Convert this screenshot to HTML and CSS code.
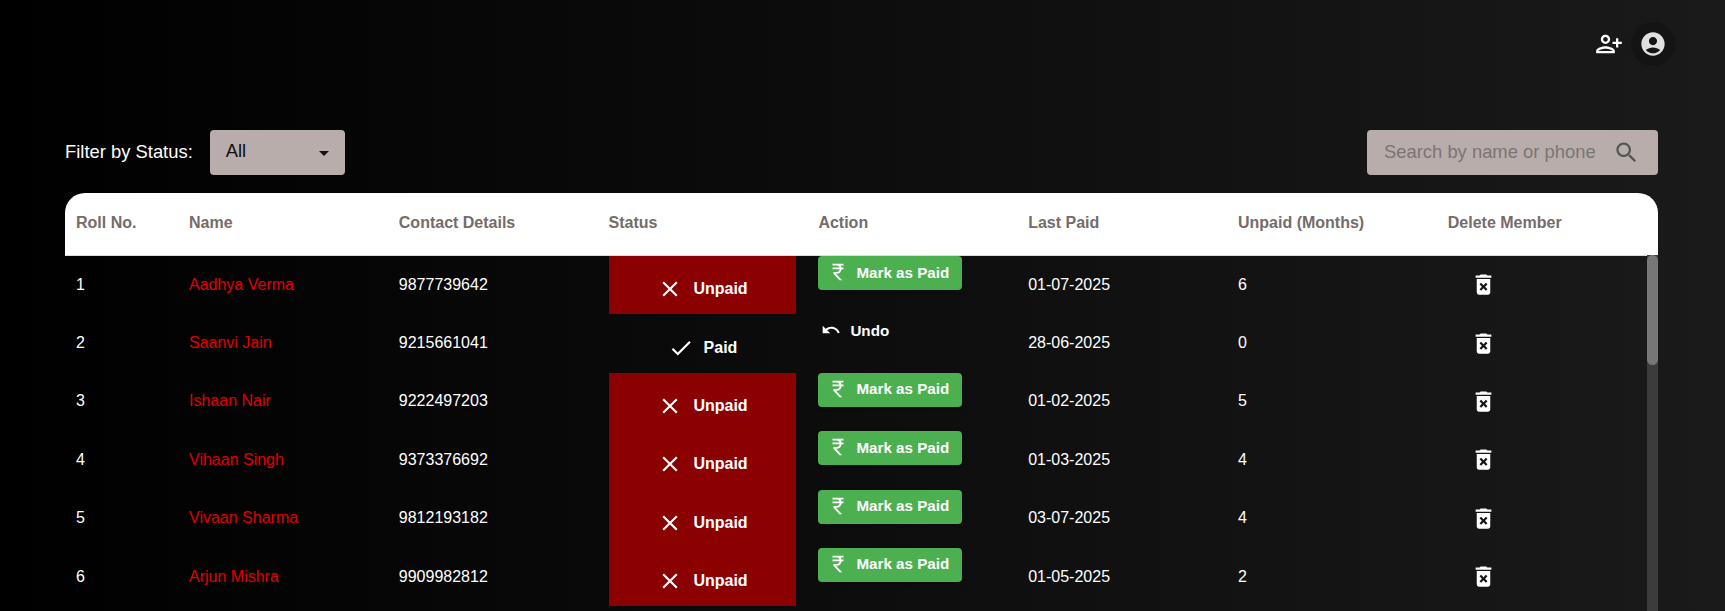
FILE: index.html
```html
<!DOCTYPE html>
<html lang="en">
<head>
    <meta charset="UTF-8">
    <meta name="viewport" content="width=device-width, initial-scale=1.0">
    <title>Members</title>
    <link rel="stylesheet" href="styles.css">
</head>
<body>
    <svg class="sprite" aria-hidden="true">
        <symbol id="i-add" viewBox="0 0 24 24"><path d="M13 8c0-2.21-1.79-4-4-4S5 5.79 5 8s1.79 4 4 4 4-1.79 4-4zm-2 0c0 1.1-.9 2-2 2s-2-.9-2-2 .9-2 2-2 2 .9 2 2zM1 18v2h16v-2c0-2.66-5.33-4-8-4s-8 1.34-8 4zm2 0c.2-.71 3.3-2 6-2 2.69 0 5.78 1.28 6 2H3zm17-3v-3h3v-2h-3V7h-2v3h-3v2h3v3h2z"/></symbol>
        <symbol id="i-account" viewBox="0 0 24 24"><path d="M12 2C6.48 2 2 6.48 2 12s4.48 10 10 10 10-4.48 10-10S17.52 2 12 2zm0 4c1.93 0 3.5 1.57 3.5 3.5S13.93 13 12 13s-3.5-1.57-3.5-3.5S10.07 6 12 6zm0 14c-2.03 0-4.43-.82-6.14-2.88C7.55 15.8 9.68 15 12 15s4.45.8 6.14 2.12C16.43 19.18 14.03 20 12 20z"/></symbol>
        <symbol id="i-search" viewBox="0 0 24 24"><path d="M15.5 14h-.79l-.28-.27C15.41 12.59 16 11.11 16 9.5 16 5.91 13.09 3 9.5 3S3 5.91 3 9.5 5.91 16 9.5 16c1.61 0 3.09-.59 4.23-1.57l.27.28v.79l5 4.99L20.49 19l-4.99-5zm-6 0C7.01 14 5 11.99 5 9.5S7.01 5 9.5 5 14 7.01 14 9.5 11.99 14 9.5 14z"/></symbol>
        <symbol id="i-close" viewBox="0 0 24 24"><path d="M19 6.41 17.59 5 12 10.59 6.41 5 5 6.41 10.59 12 5 17.59 6.41 19 12 13.41 17.59 19 19 17.59 13.41 12z"/></symbol>
        <symbol id="i-check" viewBox="0 0 24 24"><path d="M9 16.17 4.83 12l-1.41 1.41L9 19 21 7l-1.41-1.41z"/></symbol>
        <symbol id="i-rupee" viewBox="0 0 24 24"><path d="M13.66 7C13.1 5.82 11.9 5 10.5 5H6V3h12v2h-3.26c.48.58.84 1.26 1.05 2H18v2h-2.02c-.25 2.8-2.61 5-5.48 5h-.73l6.73 7h-2.77L7 14v-2h3.5c1.76 0 3.22-1.3 3.46-3H6V7h7.66z"/></symbol>
        <symbol id="i-undo" viewBox="0 0 24 24"><path d="M12.5 8c-2.65 0-5.05.99-6.9 2.6L2 7v9h9l-3.62-3.62c1.39-1.16 3.16-1.88 5.12-1.88 3.54 0 6.55 2.31 7.6 5.5l2.37-.78C21.08 11.03 17.15 8 12.5 8z"/></symbol>
        <symbol id="i-delete" viewBox="0 0 24 24"><path d="M6 19c0 1.1.9 2 2 2h8c1.1 0 2-.9 2-2V7H6v12zm2.46-7.12 1.41-1.41L12 12.59l2.12-2.12 1.41 1.41L13.41 14l2.12 2.12-1.41 1.41L12 15.41l-2.12 2.12-1.41-1.41L10.59 14l-2.13-2.12zM15.5 4l-1-1h-5l-1 1H5v2h14V4z"/></symbol>
    </svg>

    <header class="topbar">
        <button class="icon-btn add-btn" type="button"><svg class="icon"><use href="#i-add"/></svg></button>
        <button class="icon-btn account-btn" type="button"><svg class="icon"><use href="#i-account"/></svg></button>
    </header>

    <div class="toolbar">
        <div class="filter">
            <label class="filter-label">Filter by Status:</label>
            <div class="select"><span>All</span><span class="caret"></span></div>
        </div>
        <div class="search">
            <span class="placeholder">Search by name or phone</span>
            <svg class="icon"><use href="#i-search"/></svg>
        </div>
    </div>

    <div class="table-wrap">
        <table class="members">
            <colgroup>
                <col class="col-roll"><col class="col"><col class="col"><col class="col"><col class="col"><col class="col"><col class="col"><col>
            </colgroup>
            <thead>
                <tr>
                    <th>Roll No.</th><th>Name</th><th>Contact Details</th><th>Status</th><th>Action</th><th>Last Paid</th><th>Unpaid (Months)</th><th>Delete Member</th>
                </tr>
            </thead>
            <tbody>
                <tr>
                    <td>1</td><td class="name">Aadhya Verma</td><td>9877739642</td>
                    <td class="status-cell"><div class="status unpaid"><svg class="icon"><use href="#i-close"/></svg>Unpaid</div></td>
                    <td class="action-cell"><button class="pay-btn" type="button"><svg class="icon"><use href="#i-rupee"/></svg>Mark as Paid</button></td>
                    <td>01-07-2025</td><td>6</td>
                    <td class="delete-cell"><svg class="icon"><use href="#i-delete"/></svg></td>
                </tr>
                <tr>
                    <td>2</td><td class="name">Saanvi Jain</td><td>9215661041</td>
                    <td class="status-cell"><div class="status paid"><svg class="icon"><use href="#i-check"/></svg>Paid</div></td>
                    <td class="action-cell"><button class="undo-btn" type="button"><svg class="icon"><use href="#i-undo"/></svg>Undo</button></td>
                    <td>28-06-2025</td><td>0</td>
                    <td class="delete-cell"><svg class="icon"><use href="#i-delete"/></svg></td>
                </tr>
                <tr>
                    <td>3</td><td class="name">Ishaan Nair</td><td>9222497203</td>
                    <td class="status-cell"><div class="status unpaid"><svg class="icon"><use href="#i-close"/></svg>Unpaid</div></td>
                    <td class="action-cell"><button class="pay-btn" type="button"><svg class="icon"><use href="#i-rupee"/></svg>Mark as Paid</button></td>
                    <td>01-02-2025</td><td>5</td>
                    <td class="delete-cell"><svg class="icon"><use href="#i-delete"/></svg></td>
                </tr>
                <tr>
                    <td>4</td><td class="name">Vihaan Singh</td><td>9373376692</td>
                    <td class="status-cell"><div class="status unpaid"><svg class="icon"><use href="#i-close"/></svg>Unpaid</div></td>
                    <td class="action-cell"><button class="pay-btn" type="button"><svg class="icon"><use href="#i-rupee"/></svg>Mark as Paid</button></td>
                    <td>01-03-2025</td><td>4</td>
                    <td class="delete-cell"><svg class="icon"><use href="#i-delete"/></svg></td>
                </tr>
                <tr>
                    <td>5</td><td class="name">Vivaan Sharma</td><td>9812193182</td>
                    <td class="status-cell"><div class="status unpaid"><svg class="icon"><use href="#i-close"/></svg>Unpaid</div></td>
                    <td class="action-cell"><button class="pay-btn" type="button"><svg class="icon"><use href="#i-rupee"/></svg>Mark as Paid</button></td>
                    <td>03-07-2025</td><td>4</td>
                    <td class="delete-cell"><svg class="icon"><use href="#i-delete"/></svg></td>
                </tr>
                <tr>
                    <td>6</td><td class="name">Arjun Mishra</td><td>9909982812</td>
                    <td class="status-cell"><div class="status unpaid"><svg class="icon"><use href="#i-close"/></svg>Unpaid</div></td>
                    <td class="action-cell"><button class="pay-btn" type="button"><svg class="icon"><use href="#i-rupee"/></svg>Mark as Paid</button></td>
                    <td>01-05-2025</td><td>2</td>
                    <td class="delete-cell"><svg class="icon"><use href="#i-delete"/></svg></td>
                </tr>
            </tbody>
        </table>
        <div class="scrollbar"><div class="scroll-thumb"></div></div>
    </div>
</body>
</html>
```

FILE: styles.css
```css
html, body {
    height: 100%;
}
body {
    font-family: "Liberation Sans", Arial, sans-serif;
    background: linear-gradient(to right, #000, #1a1a1a);
    color: #fff;
    margin: 0;
    overflow: hidden;
}
.sprite {
    display: none;
}
.icon {
    display: block;
    fill: currentColor;
    flex: none;
}
button {
    font-family: inherit;
    border: none;
    cursor: pointer;
}
.topbar {
    display: flex;
    justify-content: flex-end;
    align-items: center;
    height: 44px;
    padding: 22px 50px 0 0;
}
.icon-btn {
    display: flex;
    align-items: center;
    justify-content: center;
    padding: 0;
    background: none;
}
.add-btn {
    color: #fff;
    width: 28px;
    height: 28px;
    margin-right: 8px;
}
.add-btn .icon {
    width: 28px;
    height: 28px;
}
.account-btn {
    color: #e0e0e0;
    width: 44px;
    height: 44px;
    border-radius: 50%;
    background: #141414;
}
.account-btn .icon {
    width: 28px;
    height: 28px;
}
.toolbar {
    display: flex;
    justify-content: space-between;
    align-items: center;
    margin: 64px 67px 0 65px;
}
.filter {
    display: flex;
    align-items: center;
    gap: 17px;
}
.filter-label {
    font-size: 18.4px;
    padding-bottom: 2px;
}
.select {
    display: flex;
    align-items: center;
    justify-content: space-between;
    box-sizing: border-box;
    width: 135px;
    height: 45px;
    padding: 0 16px 3px;
    background: #b8adab;
    border-radius: 4px;
    color: #111;
    font-size: 18.4px;
}
.caret {
    width: 0;
    height: 0;
    margin-top: 4px;
    border-left: 5px solid transparent;
    border-right: 5px solid transparent;
    border-top: 5px solid #111;
}
.search {
    display: flex;
    align-items: center;
    justify-content: space-between;
    box-sizing: border-box;
    width: 291px;
    height: 45px;
    padding: 0 18px 0 17px;
    background: #b8adab;
    border-radius: 4px;
    color: #555;
}
.search .icon {
    width: 27px;
    height: 27px;
}
.placeholder {
    font-size: 18.4px;
    color: #7b7573;
    padding-bottom: 2px;
}
.table-wrap {
    position: relative;
    margin: 18px 67px 0 65px;
}
.members {
    width: 100%;
    table-layout: fixed;
    border-collapse: collapse;
    font-size: 16px;
}
.col-roll {
    width: 113px;
}
.col {
    width: 209.8px;
}
.members th {
    height: 60px;
    padding: 0 0 2px 11px;
    background: #fff;
    border-bottom: 1px solid #ddd;
    color: #756c69;
    font-size: 16px;
    font-weight: bold;
    text-align: left;
}
.members th:first-child {
    border-top-left-radius: 20px;
}
.members th:last-child {
    border-top-right-radius: 20px;
}
.members td {
    height: 58.4px;
    padding: 0 0 1px 11px;
    box-sizing: border-box;
    color: #fff;
}
.members td.name {
    color: #e00000;
}
.members td.status-cell {
    padding-bottom: 0;
    vertical-align: top;
}
.status {
    display: flex;
    align-items: center;
    justify-content: center;
    gap: 10px;
    box-sizing: border-box;
    width: 187px;
    height: 58.4px;
    margin-left: 0.4px;
    padding-top: 8px;
    font-size: 16px;
    font-weight: bold;
}
.status .icon {
    width: 26px;
    height: 26px;
}
.unpaid {
    background: #8b0000;
}
.members td.action-cell {
    padding-bottom: 0;
    vertical-align: top;
}
.pay-btn, .undo-btn {
    display: flex;
    align-items: center;
    height: 34px;
    color: #fff;
    font-size: 15.2px;
    font-weight: bold;
    border-radius: 4px;
}
.pay-btn {
    width: 144px;
    padding: 0 0 2px 9px;
    gap: 7px;
    background: #4caf50;
    box-shadow: 0 1px 3px rgba(0,0,0,0.3);
}
.pay-btn .icon {
    width: 22px;
    height: 22px;
}
.undo-btn {
    padding: 0 0 2px 3px;
    gap: 9px;
    background: none;
}
.undo-btn .icon {
    width: 20px;
    height: 20px;
}
.members td.delete-cell {
    padding-left: 33px;
}
.delete-cell .icon {
    width: 27px;
    height: 27px;
}
.scrollbar {
    position: absolute;
    top: 62px;
    right: 0;
    bottom: -20px;
    width: 11px;
    background: #3c3c3c;
}
.scroll-thumb {
    height: 110px;
    background: #777;
    border-radius: 6px;
}
```
